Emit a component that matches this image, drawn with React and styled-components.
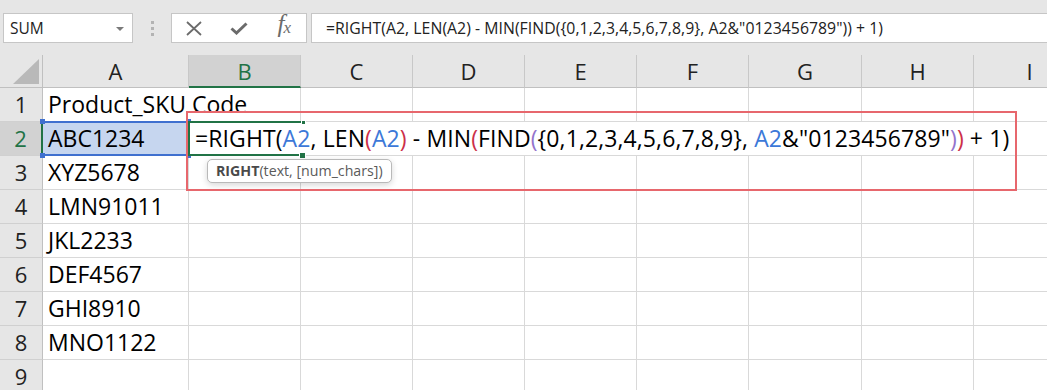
import React from 'react';
import styled, { createGlobalStyle } from 'styled-components';

const GlobalStyle = createGlobalStyle`
    html, body {
        margin: 0;
        padding: 0;
        background: #fff;
        overflow: hidden;
    }
    body {
        font-family: "Open Sans", "Noto Sans", sans-serif;
    }
    * {
        box-sizing: border-box;
    }
`;

const Screen = styled.div`
    width: 1047px;
    height: 390px;
    overflow: hidden;
    background: #fff;
`;

/* ---------- formula toolbar ---------- */

const Toolbar = styled.div`
    display: flex;
    align-items: flex-start;
    height: 55px;
    padding: 13px 0 0 3px;
    background: #e6e6e6;
`;

const NameBox = styled.div`
    width: 130px;
    height: 30px;
    background: #fff;
    border: 1px solid #c6c6c6;
    display: flex;
    align-items: center;
    justify-content: space-between;
    padding: 0 8px 0 6px;
    font-size: 15.5px;
    color: #222;
`;

const Caret = styled.span`
    width: 0;
    height: 0;
    border-left: 4px solid transparent;
    border-right: 4px solid transparent;
    border-top: 4px solid #7a7a7a;
    margin-top: 2px;
`;

const Grip = styled.div`
    display: flex;
    flex-direction: column;
    gap: 3px;
    margin: 8px 17px 0 18px;
`;

const GripDot = styled.span`
    width: 3px;
    height: 3px;
    background: #b3b3b3;
`;

const FxButtons = styled.div`
    width: 136px;
    height: 30px;
    background: #fff;
    border: 1px solid #c6c6c6;
    display: flex;
`;

const FxButton = styled.div`
    flex: 1;
    display: flex;
    align-items: center;
    justify-content: center;
    color: #6b6b6b;
`;

const FxLabel = styled.span`
    font-family: "Liberation Serif", "DejaVu Serif", serif;
    font-style: italic;
    font-size: 25px;
    line-height: 24px;
    color: #6b6b6b;
    letter-spacing: -1px;
    margin-top: -4px;

    sub {
        font-size: 17px;
        vertical-align: -1px;
    }
`;

const FormulaInput = styled.div`
    flex: 1;
    height: 30px;
    margin-left: 4px;
    margin-right: -2px;
    background: #fff;
    border: 1px solid #c6c6c6;
    padding-left: 14px;
    font-size: 15.8px;
    letter-spacing: 0.04px;
    line-height: 28px;
    color: #222;
    white-space: pre;
    overflow: hidden;
`;

/* ---------- sheet grid ---------- */

const Sheet = styled.div`
    position: relative;
    display: grid;
    grid-template-columns: 43px 146px 112px 112px 112px 112px 112px 113px 112px 112px;
    grid-template-rows: 33px repeat(9, 34px);
`;

const Corner = styled.div`
    background: #e6e6e6;
    border-right: 1px solid #c0c0c0;
    border-bottom: 1px solid #c0c0c0;
    display: flex;
    align-items: flex-end;
    justify-content: flex-end;
    padding: 0 3px 3px 0;
`;

const ColHead = styled.div`
    background: ${p => (p.$active ? '#d2d2d2' : '#e6e6e6')};
    color: ${p => (p.$active ? '#217346' : '#222')};
    border-right: 1px solid #c8c8c8;
    border-bottom: ${p => (p.$active ? '2px solid #217346' : '1px solid #c0c0c0')};
    font-size: 22px;
    line-height: ${p => (p.$active ? '32px' : '33px')};
    text-align: center;
`;

const RowHead = styled.div`
    background: ${p => (p.$active ? '#d2d2d2' : '#e6e6e6')};
    color: ${p => (p.$active ? '#217346' : '#222')};
    border-right: ${p => (p.$active ? '2px solid #217346' : '1px solid #c0c0c0')};
    border-bottom: 1px solid #d0d0d0;
    font-size: 22px;
    line-height: 33px;
    text-align: center;
`;

const Cell = styled.div`
    border-right: ${p => (p.$spill ? 'none' : '1px solid #d9d9d9')};
    border-bottom: 1px solid #d9d9d9;
    padding-left: 5px;
    font-size: 23px;
    line-height: 33px;
    color: #000;
    white-space: nowrap;
    overflow: visible;
    background: ${p => (p.$picked ? '#c6d6ef' : 'transparent')};
`;

/* ---------- things lying over the grid ---------- */

const RangeMark = styled.div`
    position: absolute;
    left: 43px;
    top: 66px;
    width: 146px;
    height: 35px;
    border: 2px solid #3f70cf;
    border-left: none;
`;

const Handle = styled.span`
    position: absolute;
    width: 5px;
    height: 5px;
    background: ${p => p.$color};
    ${p => (p.$top ? 'top: -4px;' : 'bottom: -4px;')}
    ${p => (p.$left ? 'left: -3px;' : 'right: -4px;')}
`;

const EditBox = styled.div`
    position: absolute;
    left: 189px;
    top: 67px;
    width: 826px;
    height: 33px;
    background: #fff;
    padding-left: 6px;
    font-size: 23px;
    letter-spacing: 0.1px;
    line-height: 33px;
    color: #000;
    white-space: pre;
`;

const ActiveFrame = styled.div`
    position: absolute;
    left: 188px;
    top: 66px;
    width: 115px;
    height: 35px;
    border: 2px solid #217346;
    border-right: none;
`;

const FrameKnob = styled.span`
    position: absolute;
    right: -3px;
    width: ${p => (p.$big ? '7px' : '5px')};
    height: ${p => (p.$big ? '7px' : '5px')};
    background: #217346;
    border: 1px solid #fff;
    ${p => (p.$big ? 'bottom: -5px;' : 'top: -3px;')}
`;

const Token = styled.span`
    color: ${p => p.$tone || '#000'};
`;

const Callout = styled.div`
    position: absolute;
    left: 186px;
    top: 56px;
    width: 831px;
    height: 80px;
    border: 2px solid #e7676d;
    pointer-events: none;
`;

const Tip = styled.div`
    position: absolute;
    left: 207px;
    top: 104px;
    height: 24px;
    padding: 0 8px;
    background: #fff;
    border: 1px solid #b9b9b9;
    border-radius: 5px;
    box-shadow: 0 2px 6px rgba(0, 0, 0, 0.16);
    font-size: 14.2px;
    line-height: 22px;
    color: #5a5a5a;
    white-space: nowrap;

    b {
        color: #4a4a4a;
    }
`;

const BLUE = '#3c78d8';
const RED = '#cc3049';
const PURPLE = '#9474cc';

const FORMULA = '=RIGHT(A2, LEN(A2) - MIN(FIND({0,1,2,3,4,5,6,7,8,9}, A2&"0123456789")) + 1)';

const tokens = [
    ['=RIGHT('],
    ['A2', BLUE],
    [', LEN'],
    ['(', RED],
    ['A2', BLUE],
    [')', RED],
    [' - MIN'],
    ['(', RED],
    ['FIND'],
    ['(', PURPLE],
    ['{0,1,2,3,4,5,6,7,8,9}, '],
    ['A2', BLUE],
    ['&"0123456789"'],
    [')', PURPLE],
    [')', RED],
    [' + 1)'],
];

const columns = ['A', 'B', 'C', 'D', 'E', 'F', 'G', 'H', 'I'];
const skus = ['Product_SKU Code', 'ABC1234', 'XYZ5678', 'LMN91011', 'JKL2233', 'DEF4567', 'GHI8910', 'MNO1122', ''];

const App = () => {
    return (
        <Screen>
            <GlobalStyle />
            <Toolbar>
                <NameBox>
                    SUM
                    <Caret />
                </NameBox>
                <Grip>
                    <GripDot />
                    <GripDot />
                    <GripDot />
                </Grip>
                <FxButtons>
                    <FxButton>
                        <svg width="16" height="15" viewBox="0 0 16 15">
                            <path d="M1 1 L15 14 M15 1 L1 14" stroke="currentColor" strokeWidth="1.8" fill="none" />
                        </svg>
                    </FxButton>
                    <FxButton>
                        <svg width="18" height="13" viewBox="0 0 18 13">
                            <path d="M1.5 6.5 L6.5 11 L16.5 1.5" stroke="currentColor" strokeWidth="3" fill="none" />
                        </svg>
                    </FxButton>
                    <FxButton>
                        <FxLabel>f<sub>x</sub></FxLabel>
                    </FxButton>
                </FxButtons>
                <FormulaInput>{FORMULA}</FormulaInput>
            </Toolbar>

            <Sheet>
                <Corner>
                    <svg width="26" height="25" viewBox="0 0 26 25">
                        <path d="M26 0 L26 25 L0 25 Z" fill="#b9b9b9" />
                    </svg>
                </Corner>
                {columns.map(c => (
                    <ColHead key={c} $active={c === 'B'}>{c}</ColHead>
                ))}
                {skus.map((sku, i) => (
                    <React.Fragment key={i}>
                        <RowHead $active={i === 1}>{i + 1}</RowHead>
                        {columns.map((c, j) => (
                            <Cell key={c} $spill={i === 0 && j === 0} $picked={i === 1 && j === 0}>
                                {j === 0 ? sku : ''}
                            </Cell>
                        ))}
                    </React.Fragment>
                ))}

                <RangeMark>
                    <Handle $color="#3f70cf" $top $left />
                    <Handle $color="#3f70cf" $top />
                    <Handle $color="#3f70cf" $left />
                    <Handle $color="#3f70cf" />
                </RangeMark>
                <EditBox>
                    {tokens.map(([text, tone], k) => (
                        <Token key={k} $tone={tone}>{text}</Token>
                    ))}
                </EditBox>
                <ActiveFrame>
                    <FrameKnob />
                    <FrameKnob $big />
                </ActiveFrame>
                <Tip>
                    <b>RIGHT</b>(text, [num_chars])
                </Tip>
                <Callout />
            </Sheet>
        </Screen>
    );
};

export default App;
